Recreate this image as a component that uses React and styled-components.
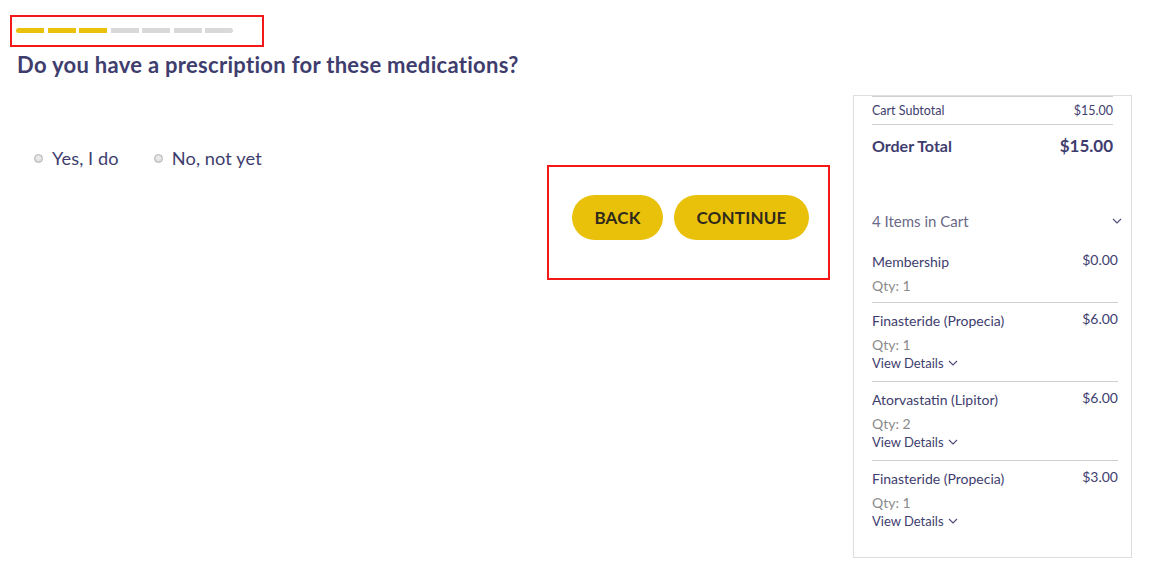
import React from 'react';
import styled, { createGlobalStyle } from 'styled-components';

const GlobalStyle = createGlobalStyle`
  body {
    margin: 0;
    background: #fff;
    font-family: Lato, "Open Sans", sans-serif;
    color: #3e3d6e;
  }
`;

const Page = styled.div`
  display: flex;
  align-items: flex-start;
  padding: 15px 0 0 10px;
  width: 1162px;
  box-sizing: border-box;
`;

const Main = styled.div`
  width: 820px;
  display: flex;
  flex-direction: column;
`;

const Highlight = styled.div`
  border: 2px solid #f41818;
  box-sizing: border-box;
`;

const ProgressBox = styled(Highlight)`
  width: 254px;
  height: 32px;
  display: flex;
  align-items: flex-start;
  padding: 11px 0 0 4px;
`;

const Segments = styled.div`
  display: flex;
  gap: 3.5px;
`;

const Segment = styled.span`
  width: 28px;
  height: 5px;
  background: ${p => (p.done ? '#e9c10b' : '#d9d9d9')};
  &:first-child { border-radius: 3px 0 0 3px; }
  &:last-child { border-radius: 0 3px 3px 0; }
`;

const Title = styled.h1`
  margin: 4px 0 0 7px;
  font-size: 22px;
  line-height: 28px;
  font-weight: 700;
  color: #3e3d6e;
  letter-spacing: 0.3px;
`;

const Options = styled.div`
  display: flex;
  gap: 35px;
  margin: 67px 0 0 24px;
`;

const Option = styled.label`
  display: flex;
  align-items: center;
  gap: 9px;
  font-size: 18.2px;
  line-height: 24px;
  color: #3e3d6e;
  letter-spacing: 0.1px;
`;

const Radio = styled.span`
  width: 9px;
  height: 9px;
  border-radius: 50%;
  border: 1px solid #b4b4b4;
  background: radial-gradient(circle at 50% 40%, #f2f2f2, #cfcfcf);
  box-sizing: border-box;
`;

const ActionsRow = styled.div`
  display: flex;
  justify-content: flex-end;
  margin-top: -5px;
`;

const ActionsBox = styled(Highlight)`
  width: 283px;
  height: 115px;
  display: flex;
  gap: 11px;
  padding: 28px 0 0 23px;
`;

const PillButton = styled.button`
  height: 45px;
  width: ${p => p.w}px;
  border: none;
  border-radius: 23px;
  background: #e9c10b;
  color: #2f2a1c;
  font-family: Lato, sans-serif;
  font-weight: 700;
  font-size: 17px;
  letter-spacing: 0.2px;
  cursor: pointer;
`;

const Sidebar = styled.aside`
  margin: 80px 0 0 23px;
  width: 279px;
  height: 463px;
  box-sizing: border-box;
  border: 1px solid #dedede;
  padding: 0 13px 0 18px;
`;

const Totals = styled.div`
  margin-right: 5px;
`;

const SubtotalRow = styled.div`
  display: flex;
  justify-content: space-between;
  align-items: center;
  height: 29px;
  border-top: 1px solid #cfcfcf;
  border-bottom: 1px solid #cfcfcf;
  box-sizing: border-box;
  font-size: 12.5px;
  color: #3e3d6e;
`;

const OrderRow = styled.div`
  display: flex;
  justify-content: space-between;
  align-items: center;
  margin-top: 10px;
  line-height: 22px;
  font-weight: 700;
  font-size: 16px;
  span:last-child { font-size: 17px; }
`;

const CartHeader = styled.div`
  display: flex;
  justify-content: space-between;
  align-items: center;
  margin: 54px -4px 0 0;
  line-height: 20px;
  font-size: 15px;
  color: #6a6988;
  font-weight: 400;
`;

const Item = styled.div`
  padding: 9px 0 ${p => (p.last ? 28 : 7)}px;
  border-bottom: ${p => (p.last ? 'none' : '1px solid #cfcfcf')};
  margin-top: ${p => (p.first ? 13 : 0)}px;
`;

const ItemTop = styled.div`
  display: flex;
  justify-content: space-between;
  line-height: 18px;
  font-size: 14px;
  color: #3e3d6e;
  span:last-child { margin-top: -2px; }
`;

const Qty = styled.div`
  margin-top: 6px;
  line-height: 18px;
  font-size: 14px;
  color: #8b8b8b;
`;

const Details = styled.div`
  display: flex;
  align-items: center;
  gap: 4px;
  height: 18px;
  font-size: 13px;
  color: #3e3d6e;
  margin-bottom: 2px;
`;

const Chevron = ({ size = 10 }) => (
  <svg width={size} height={size * 0.6} viewBox="0 0 10 6" fill="none">
    <path d="M1 1l4 4 4-4" stroke="#4b4a7a" strokeWidth="1.1" />
  </svg>
);

const items = [
  { name: 'Membership', price: '$0.00', qty: 1, details: false },
  { name: 'Finasteride (Propecia)', price: '$6.00', qty: 1, details: true },
  { name: 'Atorvastatin (Lipitor)', price: '$6.00', qty: 2, details: true },
  { name: 'Finasteride (Propecia)', price: '$3.00', qty: 1, details: true },
];

export default function App() {
  return (
    <>
      <GlobalStyle />
      <Page>
        <Main>
          <ProgressBox>
            <Segments>
              {[0, 1, 2, 3, 4, 5, 6].map(i => (
                <Segment key={i} done={i < 3} />
              ))}
            </Segments>
          </ProgressBox>
          <Title>Do you have a prescription for these medications?</Title>
          <Options>
            <Option><Radio />Yes, I do</Option>
            <Option><Radio />No, not yet</Option>
          </Options>
          <ActionsRow>
            <ActionsBox>
              <PillButton w={91}>BACK</PillButton>
              <PillButton w={135}>CONTINUE</PillButton>
            </ActionsBox>
          </ActionsRow>
        </Main>
        <Sidebar>
          <Totals>
            <SubtotalRow>
              <span>Cart Subtotal</span>
              <span>$15.00</span>
            </SubtotalRow>
            <OrderRow>
              <span>Order Total</span>
              <span>$15.00</span>
            </OrderRow>
          </Totals>
          <CartHeader>
            <span>4 Items in Cart</span>
            <Chevron />
          </CartHeader>
          {items.map((it, i) => (
            <Item key={i} first={i === 0} last={i === items.length - 1}>
              <ItemTop>
                <span>{it.name}</span>
                <span>{it.price}</span>
              </ItemTop>
              <Qty>Qty: {it.qty}</Qty>
              {it.details && (
                <Details>View Details <Chevron size={10} /></Details>
              )}
            </Item>
          ))}
        </Sidebar>
      </Page>
    </>
  );
}
